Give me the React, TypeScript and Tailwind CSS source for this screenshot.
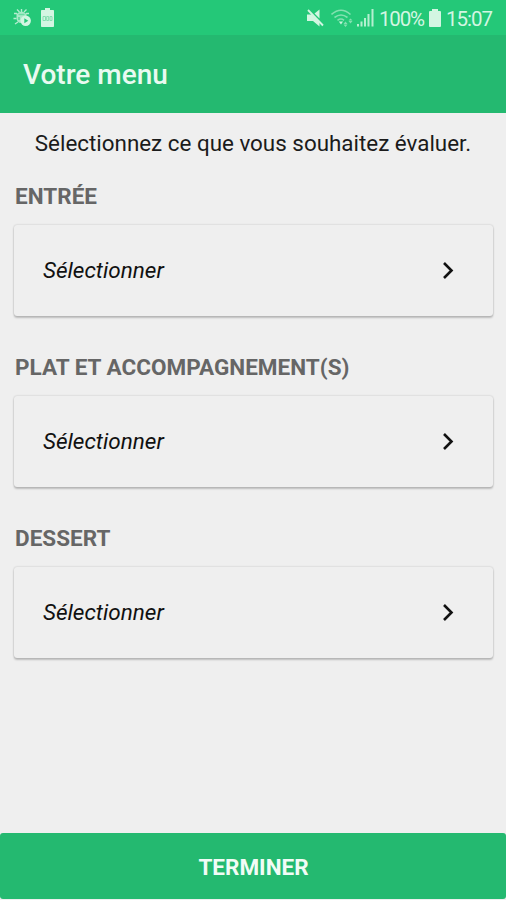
import React from "react";

function BugIcon() {
  return (
    <svg width="20" height="20" viewBox="0 0 20 20" fill="none" stroke="#b5edd0" strokeWidth="1.4">
      <path d="M4 1.500 6.500 4M13.500 1.500 11 4M1 5.500h3M0.500 10.500h3M2 16l3-2M13 5.500h3M8.500 1v3" />
      <path d="M3.500 6q5-5 10 0v3L8.500 15q-5 0-5-5z" fill="#a9eac8" stroke="none" />
      <path d="M6 9v3" stroke="#4bd28f" />
      <path d="M5.500 6.500h6" stroke="#6bdca3" />
      <circle cx="12.700" cy="12.700" r="5.200" fill="#d3f6e2" stroke="none" />
      <path d="M11.300 10.200v5l4-2.500z" fill="#27c97a" stroke="none" />
    </svg>
  );
}

function BatteryInfoIcon() {
  return (
    <svg width="14" height="19" viewBox="0 0 14 19">
      <path d="M4 0h5v2h3.200q.8 0 .8.8v15.400q0 .8-.8.8H.8q-.8 0-.8-.8V2.800q0-.8.8-.8H4z" fill="#d3f6e2" />
      <path d="M2 8.500h2.500v4H2zM5.700 8.500h2v4h-2zM9 8.500h2v4H9z" stroke="#86dfb1" strokeWidth="1" fill="none" />
    </svg>
  );
}

function MuteIcon() {
  return (
    <svg width="18" height="18" viewBox="0 0 18 18" fill="#d3f6e2">
      <path d="M1 5.500H5.500L13.500 13v4.500L7 12H1z" />
      <path d="M8.500 4.500 13.500.5V9.500z" />
      <path d="M2 1 17 16.500" stroke="#d3f6e2" strokeWidth="1.800" />
    </svg>
  );
}

function WifiIcon() {
  return (
    <svg width="23" height="19" viewBox="0 0 23 19" fill="none" stroke="#83e1b0" strokeWidth="1.600">
      <path d="M0.500 5.500q9.500-8.500 19 0M3.500 8.500q6.500-5 13 0" />
      <path d="M6.500 11.300q3.500-2.500 6.500 0" />
      <path d="M7.800 12.500h4.200L10 15.500z" fill="#c9f3dc" stroke="none" />
      <path d="M12.500 15l2-2.500 2 2.500zM12.500 15.500l2 2.500 2-2.500zM17.500 12l2 2.500 2-2.500zM17.500 11.500l2-2 2 2z" fill="#83e1b0" stroke="none" />
    </svg>
  );
}

function SignalIcon() {
  return (
    <svg width="17" height="18" viewBox="0 0 17 18" fill="#b5efd0">
      <path d="M0 15h2v2.500H0zM3.500 12.500h2v5h-2zM7 9h2v8.500H7zM10.500 5h2v12.500h-2zM14.500 0h2v17.500h-2z" />
    </svg>
  );
}

function StatusBar() {
  return (
    <div className="flex h-[35px] items-start bg-[#24c878] text-[#d3f6e2]">
      <div className="ml-[13px] mt-[8px]"><BugIcon /></div>
      <div className="ml-[8px] mt-[8px]"><BatteryInfoIcon /></div>
      <div className="ml-[251px] mt-[9px]"><MuteIcon /></div>
      <div className="ml-[7px] mt-[9px]"><WifiIcon /></div>
      <div className="ml-[3px] mt-[9px]"><SignalIcon /></div>
      <div className="ml-[5px] mt-[7px] w-[45px] whitespace-nowrap text-[20.5px] leading-6 tracking-[-1.2px]">100%</div>
      <svg className="ml-[5px] mt-[9px]" width="12" height="18" viewBox="0 0 12 18">
        <path d="M3 0h6v2h2q1 0 1 1v14q0 1-1 1H1q-1 0-1-1V3q0-1 1-1h2z" fill="#d3f6e2" />
      </svg>
      <div className="ml-[5px] mt-[7px] whitespace-nowrap text-[20.5px] leading-6 tracking-[-1px]">15:07</div>
    </div>
  );
}

function MenuSection({ title }: { title: string }) {
  return (
    <section className="mb-[38px]">
      <h2 className="h-[28px] pl-px text-[22.5px] font-bold leading-[26px] tracking-[0.02px] text-[#666]">{title}</h2>
      <button className="mt-[14px] flex h-[91px] w-[479px] items-center justify-between rounded-[3px] pb-px pl-[29px] pr-[39px] shadow-[0_0_2px_rgba(0,0,0,0.22),0_2px_2px_rgba(0,0,0,0.2)]">
        <span className="text-[22.5px] italic leading-7 text-[#111]">Sélectionner</span>
        <svg width="12" height="18" viewBox="0 0 12 18" fill="none" stroke="#111" strokeWidth="2.600">
          <path d="m2 2 7.500 7.500-7.500 7.500" />
        </svg>
      </button>
    </section>
  );
}

export default function App() {
  return (
    <div className="flex h-[900px] w-[506px] flex-col overflow-hidden bg-[#efefef] font-['Roboto',sans-serif]">
      <StatusBar />
      <header className="flex h-[78px] shrink-0 items-center bg-[#24b970] pl-[23px] pt-[2px]">
        <h1 className="text-[28px] font-medium leading-8 text-[#e9faf1]">Votre menu</h1>
      </header>
      <main className="flex-1 px-[14px] pt-[16px]">
        <p className="mb-[39px] h-[15px] whitespace-nowrap text-center text-[22.4px] leading-7 text-[#1b1b1b]">
          Sélectionnez ce que vous souhaitez évaluer.
        </p>
        <MenuSection title="ENTRÉE" />
        <MenuSection title="PLAT ET ACCOMPAGNEMENT(S)" />
        <MenuSection title="DESSERT" />
      </main>
      <button className="mb-[1px] h-[66px] shrink-0 rounded-[3px] bg-[#24b970] pl-px pt-[3px] text-[22.5px] font-bold text-[#f1fcf6]">
        TERMINER
      </button>
    </div>
  );
}
